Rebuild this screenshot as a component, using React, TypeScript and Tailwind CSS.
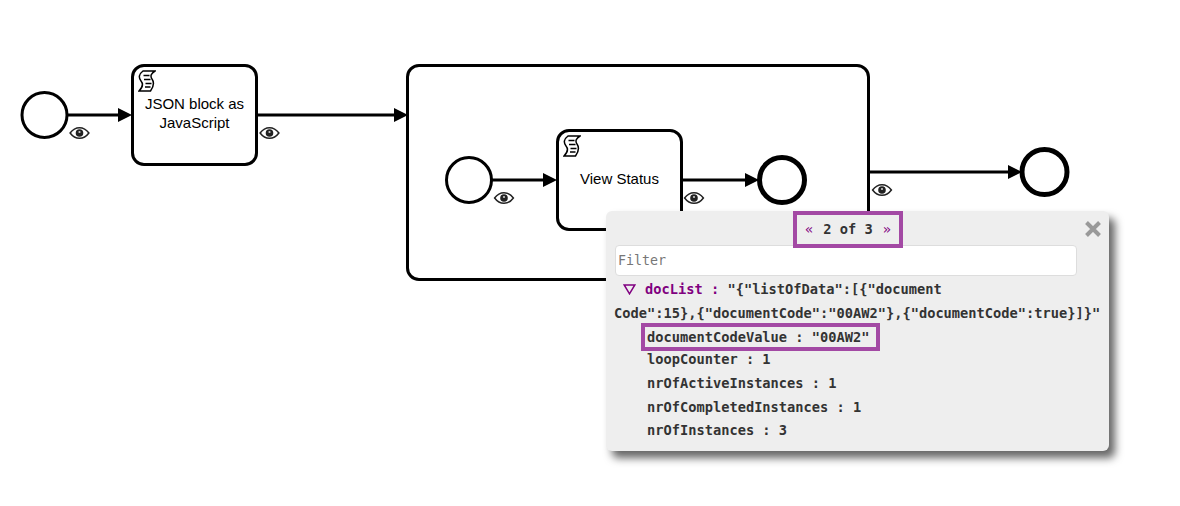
// BPMN diagram with a variable inspector popup open on top

const MONO = "font-['DejaVu_Sans_Mono',monospace]";

function EventCircle({ x, y, r, width }: { x: number; y: number; r: number; width: number }) {
  return <circle cx={x} cy={y} r={r} fill="#fff" stroke="#000" strokeWidth={width} />;
}

function Edge({ from, to, y }: { from: number; to: number; y: number }) {
  return (
    <g>
      <line x1={from} y1={y} x2={to - 12} y2={y} stroke="#000" strokeWidth={3} />
      <polygon points={`${to - 14},${y - 7} ${to},${y} ${to - 14},${y + 7}`} fill="#000" />
    </g>
  );
}

function Eye({ x, y }: { x: number; y: number }) {
  return (
    <g transform={`translate(${x - 10} ${y - 6})`} fill="none">
      <path d="M0.6 6 C4 1.4 7 0.7 10 0.7 C13 0.7 16 1.4 19.4 6 C16 10.6 13 11.3 10 11.3 C7 11.3 4 10.6 0.6 6 Z" stroke="#222" strokeWidth={1.5} />
      <circle cx={10} cy={6} r={3.8} fill="#222" />
      <circle cx={10} cy={5} r={1.1} fill="#ccc" />
    </g>
  );
}

function ScrollIcon() {
  return (
    <svg width="18" height="22" viewBox="0 0 18 22" className="block">
      <path
        d="M5 1 H17 C13 3.5 12 6 14 9 C16.5 12.5 16 16 12.5 21 H1 C5 17 5.5 14 3 11 C0.2 7.5 1 4 5 1 Z"
        fill="#fff"
        stroke="#000"
        strokeWidth={1.5}
      />
      <path d="M5.5 5.5 H11.5 M6 9.5 H12.5 M7.5 13.5 H13.5 M7 17 H12.5" stroke="#000" strokeWidth={1.3} />
    </svg>
  );
}

function ScriptTask({ className, label }: { className: string; label: string }) {
  return (
    <div className={`absolute flex flex-col rounded-[13px] border-[3px] border-black bg-white ${className}`}>
      <div className="pt-[3px] pl-[4px]">
        <ScrollIcon />
      </div>
      <div className="px-2 pt-[2px] text-center font-['Liberation_Sans',sans-serif] text-[15px] leading-[19px] text-black">
        {label}
      </div>
    </div>
  );
}

function Row({ children }: { children: React.ReactNode }) {
  return <div className="h-[23.7px] pl-[33px] leading-[23.7px]">{children}</div>;
}

export default function App() {
  return (
    <div className="relative h-[506px] w-[1180px] overflow-hidden bg-white">
      {/* Subprocess sits under the edges */}
      <div className="absolute left-[406px] top-[64px] h-[217px] w-[464px] rounded-[13px] border-[3px] border-black bg-white" />

      <ScriptTask className="left-[131px] top-[64px] h-[102px] w-[127px]" label="JSON block as JavaScript" />
      <ScriptTask className="left-[556px] top-[129px] h-[102px] w-[127px]" label="" />
      <div className="absolute left-[556px] top-[169px] w-[127px] text-center font-['Liberation_Sans',sans-serif] text-[15px] leading-[19px] text-black">
        View Status
      </div>

      <svg width="1180" height="506" className="absolute left-0 top-0">
        <Edge from={67} to={132} y={115} />
        <Edge from={258} to={408} y={115} />
        <Edge from={492} to={557} y={180} />
        <Edge from={683} to={759} y={180} />
        <Edge from={870} to={1022} y={172} />
        <EventCircle x={44.5} y={115} r={22.5} width={3} />
        <EventCircle x={469} y={180} r={22.5} width={3} />
        <EventCircle x={782} y={180} r={22.5} width={5} />
        <EventCircle x={1044.5} y={172} r={22.5} width={5} />
        <Eye x={79.5} y={133} />
        <Eye x={269.5} y={133} />
        <Eye x={504} y={198} />
        <Eye x={694} y={198} />
        <Eye x={882} y={190} />
      </svg>

      {/* Variable popup */}
      <div className={`absolute left-[606px] top-[211px] h-[240px] w-[503px] rounded-[6px] bg-[#eeeeee] pl-[8px] shadow-[6px_7px_8px_#666] ${MONO} text-[13.7px] font-bold text-[#333]`}>
        <div className="flex justify-center pr-[27px]">
          <div className="flex h-[37px] w-[110px] items-center justify-center gap-[10px] border-[4px] border-[#a349a4] pb-[1px]">
            <span className="font-normal text-[#800080]">«</span>
            <span>2 of 3</span>
            <span className="font-normal text-[#800080]">»</span>
          </div>
        </div>
        <button className="absolute right-[7px] top-[9px]">
          <svg width="18" height="18" viewBox="0 0 18 18" className="block">
            <path d="M2.5 2.5 L15.5 15.5 M15.5 2.5 L2.5 15.5" stroke="#999" strokeWidth={4} />
          </svg>
        </button>
        <div className="-mt-[3px] ml-[1px] flex h-[31px] w-[462px] items-center rounded-[4px] border border-[#ddd] bg-white pl-[2px] text-[13.3px] font-normal text-[#777]">
          Filter
        </div>
        <div className="mt-[2px] whitespace-pre leading-[23.7px]">
          <div className="flex items-center">
            <svg width="13" height="11" viewBox="0 0 13 11" className="ml-[9px] mr-[9px] block">
              <path d="M1.2 1 H11.8 L6.5 9.8 Z" fill="none" stroke="#800080" strokeWidth={1.5} />
            </svg>
            <span className="text-[#800080]">docList : </span>
            <span>{'"{"listOfData":[{"document'}</span>
          </div>
          <div>{'Code":15},{"documentCode":"00AW2"},{"documentCode":true}]}"'}</div>
        </div>
        <div className="ml-[27px] -mt-[2px] flex h-[28px] w-[239px] items-center border-[4px] border-[#a349a4] pl-[2px] pb-[1px]">
          documentCodeValue : "00AW2"
        </div>
        <div className="-mt-[3px]">
          <Row>loopCounter : 1</Row>
          <Row>nrOfActiveInstances : 1</Row>
          <Row>nrOfCompletedInstances : 1</Row>
          <Row>nrOfInstances : 3</Row>
        </div>
      </div>
    </div>
  );
}
